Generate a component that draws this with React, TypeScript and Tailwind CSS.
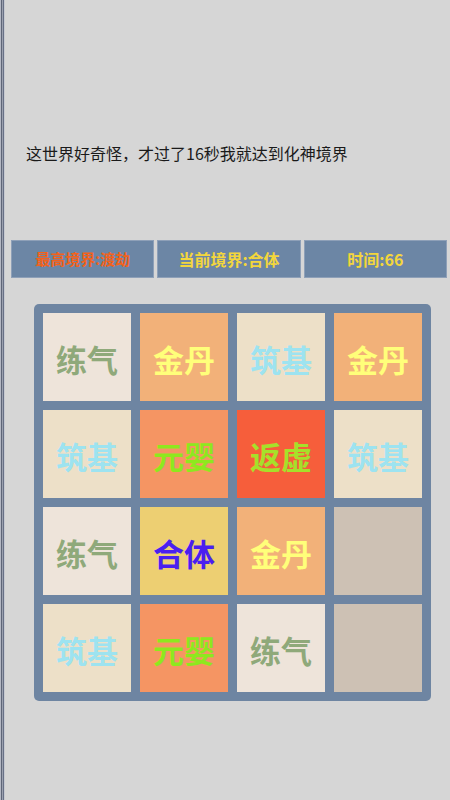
import React from "react";

type Tile = { label: string; bg: string; fg: string } | null;

const LIAN: Tile = { label: "练气", bg: "bg-[#eee4da]", fg: "text-[#8fa97a]" };
const ZHU: Tile = { label: "筑基", bg: "bg-[#ede0c8]", fg: "text-[#9de3f0]" };
const JIN: Tile = { label: "金丹", bg: "bg-[#f2b179]", fg: "text-[#ffff7a]" };
const YUAN: Tile = { label: "元婴", bg: "bg-[#f59563]", fg: "text-[#8ee81e]" };
const FAN: Tile = { label: "返虚", bg: "bg-[#f65e3b]", fg: "text-[#a6e02a]" };
const HE: Tile = { label: "合体", bg: "bg-[#edcf72]", fg: "text-[#4a1ff0]" };

const BOARD: Tile[] = [
  LIAN, JIN, ZHU, JIN,
  ZHU, YUAN, FAN, ZHU,
  LIAN, HE, JIN, null,
  ZHU, YUAN, LIAN, null,
];

const font = { fontFamily: '"Noto Sans CJK SC", "Noto Sans", sans-serif' };

export default function App() {
  return (
    <div
      className="relative flex h-[800px] w-[450px] flex-col bg-[#d6d6d6]"
      style={font}
    >
      {/* left window edge */}
      <div className="absolute inset-y-0 left-0 flex">
        <div className="w-px bg-[#b4b8c4]" />
        <div className="w-px bg-[#5f6678]" />
        <div className="w-px bg-[#9aa0ae]" />
        <div className="w-px bg-[#687086]" />
        <div className="w-px bg-[#c6c9d0]" />
      </div>

      <p className="mt-[141px] pl-[26px] text-[16px] leading-6 text-[#1a1a1a]">
        这世界好奇怪，才过了16秒我就达到化神境界
      </p>

      <div className="mt-[75px] ml-[11px] flex w-[436px] gap-[3px]">
        <div className="flex h-[38px] flex-1 items-center justify-center border border-[#8ea0b8] bg-[#6c86a5] text-[15px] font-bold text-[#f2621c]">
          最高境界:渡劫
        </div>
        <div className="flex h-[38px] flex-1 items-center justify-center border border-[#8ea0b8] bg-[#6c86a5] text-[16px] font-bold text-[#f3d63c]">
          当前境界:合体
        </div>
        <div className="flex h-[38px] flex-1 items-center justify-center border border-[#8ea0b8] bg-[#6c86a5] text-[16px] font-bold text-[#f3d63c]">
          时间:66
        </div>
      </div>

      <div className="mt-[26px] ml-[34px] grid w-[397px] grid-cols-4 gap-[9px] rounded-[5px] bg-[#6e85a2] p-[9px]">
        {BOARD.map((t, i) =>
          t ? (
            <div
              key={i}
              className={`flex h-[88px] items-center justify-center pt-[4px] text-[31px] font-bold ${t.bg} ${t.fg}`}
            >
              {t.label}
            </div>
          ) : (
            <div key={i} className="h-[88px] bg-[#cdc1b4]" />
          )
        )}
      </div>
    </div>
  );
}
